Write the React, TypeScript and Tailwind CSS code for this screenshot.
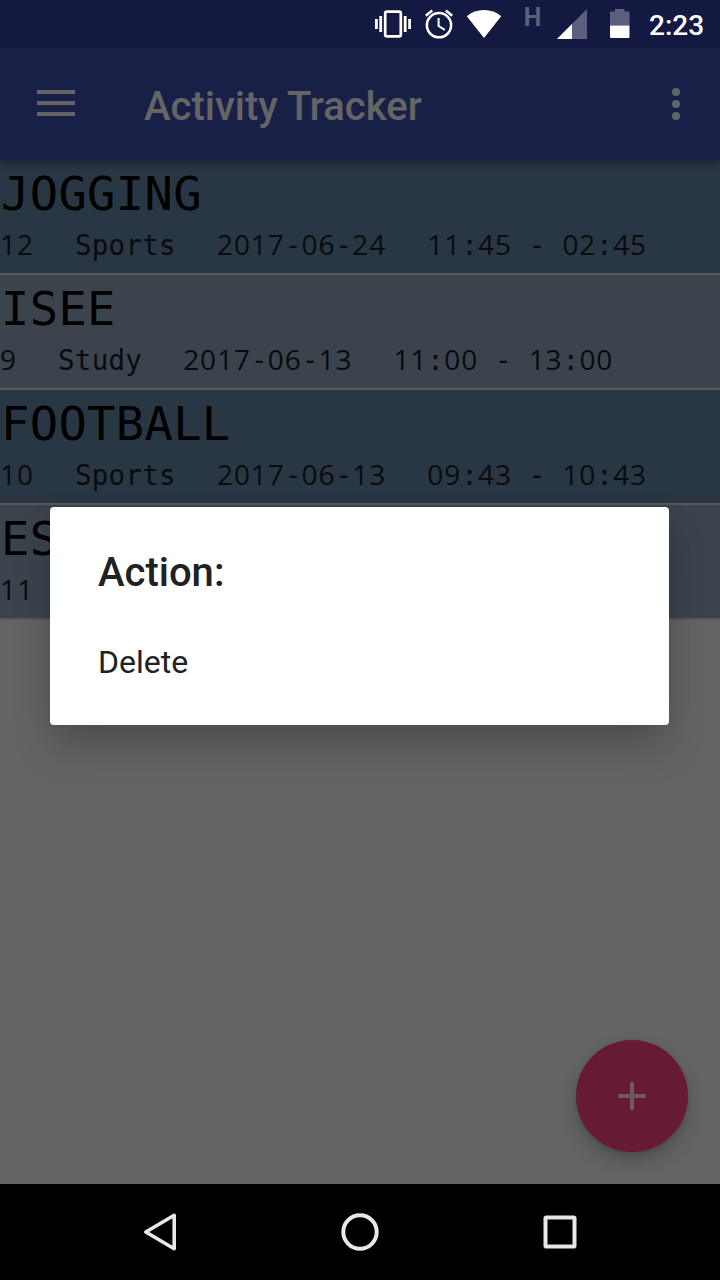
import { Fragment } from 'react';

type Activity = { id: number; title: string; category?: string; date?: string; time?: string };

const activities: Activity[] = [
  { id: 12, title: 'JOGGING', category: 'Sports', date: '2017-06-24', time: '11:45 - 02:45' },
  { id: 9, title: 'ISEE', category: 'Study', date: '2017-06-13', time: '11:00 - 13:00' },
  { id: 10, title: 'FOOTBALL', category: 'Sports', date: '2017-06-13', time: '09:43 - 10:43' },
  { id: 11, title: 'ES' },
];

/* Digits use a proportional face with tabular figures, spaced to the monospace cell. */
function Mono({ text }: { text: string }) {
  return (
    <>
      {text.split(/(\d+)/).map((run, i) =>
        /\d/.test(run) ? (
          <span key={i} className="font-['Open_Sans',sans-serif] text-[28px] leading-none tracking-[0.94px]">
            {run}
          </span>
        ) : (
          <Fragment key={i}>{run}</Fragment>
        ),
      )}
    </>
  );
}

function StatusBar() {
  return (
    <div className="z-20 flex h-12 shrink-0 items-center bg-[#131940] text-white">
      <svg className="ml-[370px] h-12 w-[270px] shrink-0" viewBox="370 0 270 48" fill="currentColor">
        <rect x="385.2" y="11.7" width="15.6" height="24.6" rx="1.6" fill="none" stroke="currentColor" strokeWidth="2.7" />
        <path d="M375 19h2.8v10H375zM379.3 16h2.8v16h-2.8zM403.8 16h2.8v16h-2.8zM408.2 19h2.8v10h-2.8z" />
        <g fill="none" stroke="currentColor">
          <circle cx="439" cy="25.2" r="12.1" strokeWidth="2.5" />
          <path d="M438.6 18v8l6.2 3.8" strokeWidth="2" />
          <path d="M425.8 15.8l6.4-5.2M452.2 15.8l-6.4-5.2" strokeWidth="2.6" />
        </g>
        <path d="M484 38L466.8 16.2C471.5 12.2 477.5 10 484 10s12.5 2.2 17.2 6.2z" />
        <text x="523.8" y="26" fontSize="25" fontWeight="700" fontFamily="Roboto, sans-serif" fill="#5c5f7d">H</text>
        <path d="M587 9v30h-30z" fill="#5c5f7d" />
        <path d="M572 24v15h-15z" />
        <path d="M615 9h9.5v2.5h5v14H610v-14h5z" fill="#5c5f7d" />
        <path d="M610 25.5h19.5v11.5a1 1 0 0 1-1 1H611a1 1 0 0 1-1-1z" />
      </svg>
      <span className="ml-[9px] pt-1 text-[28px] font-medium leading-8">2:23</span>
    </div>
  );
}

function AppBar() {
  return (
    <header className="z-10 flex h-28 shrink-0 items-center bg-[#192048] text-[#656565] shadow-[0_2px_8px_rgba(0,0,0,0.4)]">
      <button className="mb-0.5 ml-[37px] flex h-[26px] w-[38px] flex-col justify-between" aria-label="Menu">
        <span className="h-1 w-full bg-current" />
        <span className="h-1 w-full bg-current" />
        <span className="h-1 w-full bg-current" />
      </button>
      <h1 className="ml-[69px] flex-1 pt-1.5 text-[40px] font-medium leading-[48px]">Activity Tracker</h1>
      <button className="mr-10 flex flex-col gap-1" aria-label="More options">
        <span className="size-2 rounded-full bg-current" />
        <span className="size-2 rounded-full bg-current" />
        <span className="size-2 rounded-full bg-current" />
      </button>
    </header>
  );
}

function ActivityRow({ activity }: { activity: Activity }) {
  return (
    <li className="h-[115px] overflow-hidden whitespace-pre border-b-2 border-[#585858] bg-[#3b444d] font-['Droid_Sans_Mono','DejaVu_Sans_Mono',monospace] odd:bg-[#293643]">
      <div className="h-[67px] pl-px pt-[6px] text-[47px] leading-[56px] tracking-[0.4px] text-black">{activity.title}</div>
      <div className="flex gap-[41px] text-[27.5px] leading-[36px] tracking-[0.28px] text-[#090b0d]">
        <span><Mono text={String(activity.id)} /></span>
        {activity.category && <span>{activity.category}</span>}
        {activity.date && <span><Mono text={activity.date} /></span>}
        {activity.time && <span><Mono text={activity.time} /></span>}
      </div>
    </li>
  );
}

function NavBar() {
  return (
    <nav className="flex h-24 shrink-0 items-center justify-center gap-[152px] bg-black text-[#e8e8e8]">
      <svg className="size-12" viewBox="0 0 48 48" fill="none" stroke="currentColor" strokeWidth="3.6" strokeLinejoin="round">
        <path d="M9.8 24L38.2 7.3v33.4z" />
      </svg>
      <svg className="size-12" viewBox="0 0 48 48" fill="none" stroke="currentColor" strokeWidth="4">
        <circle cx="24" cy="24" r="16.7" />
      </svg>
      <svg className="size-12" viewBox="0 0 48 48" fill="none" stroke="currentColor" strokeWidth="4">
        <rect x="9.5" y="9.5" width="29" height="29" rx="0.8" />
      </svg>
    </nav>
  );
}

export default function App() {
  return (
    <div className="relative flex h-[1280px] w-[720px] flex-col overflow-hidden bg-[#646464] font-['Roboto',sans-serif]">
      <StatusBar />
      <AppBar />
      <main className="flex-1">
        <ul>
          {activities.map((a) => (
            <ActivityRow key={a.id} activity={a} />
          ))}
        </ul>
      </main>
      <NavBar />

      <button
        aria-label="Add"
        className="absolute bottom-32 right-8 flex size-28 items-center justify-center rounded-full bg-[#661a34] shadow-[0_9px_18px_rgba(0,0,0,0.22),0_1px_5px_rgba(0,0,0,0.12)]"
      >
        <svg className="size-7" viewBox="0 0 28 28" fill="#6b5960">
          <path d="M12 0h4v12h12v4H16v12h-4V16H0v-4h12z" />
        </svg>
      </button>

      <div
        role="dialog"
        className="absolute left-[50px] top-[507px] z-20 flex h-[218px] w-[619px] flex-col rounded bg-white px-12 text-[#212121] shadow-[0_24px_40px_-2px_rgba(0,0,0,0.2),0_2px_24px_rgba(0,0,0,0.08)]"
      >
        <h2 className="pt-[42px] text-[40px] font-medium leading-[48px]">Action:</h2>
        <button className="pt-[47px] text-left text-[32px] leading-9">Delete</button>
      </div>
    </div>
  );
}
